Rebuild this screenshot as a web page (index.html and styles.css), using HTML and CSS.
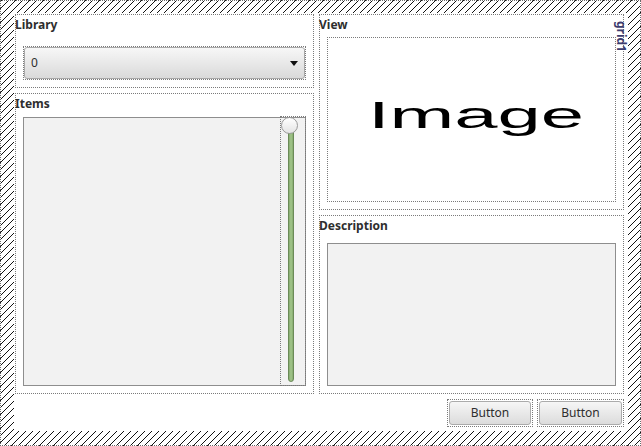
FILE: index.html
```html
<!DOCTYPE html>
<html>
<head>
<meta charset="utf-8">
<link rel="stylesheet" href="styles.css">
</head>
<body>
<div class="form">
  <div class="canvas">
    <div class="columns">
      <div class="col col-left">
        <section class="group lib">
          <div class="label">Library</div>
          <div class="outline combo-wrap">
            <div class="combo">
              <span class="combo-text">0</span>
              <svg class="arrow" width="8" height="5" viewBox="0 0 8 5"><polygon points="0,0 8,0 4,5" fill="#111"/></svg>
            </div>
          </div>
        </section>
        <section class="group items">
          <div class="label">Items</div>
          <div class="list">
            <div class="slider">
              <div class="groove"></div>
              <div class="handle"></div>
            </div>
          </div>
        </section>
      </div>
      <div class="col col-right">
        <section class="group view">
          <div class="label">View</div>
          <div class="image-box"><span class="image-text">Image</span></div>
        </section>
        <section class="group desc">
          <div class="label">Description</div>
          <div class="textedit"></div>
        </section>
      </div>
    </div>
    <div class="buttons">
      <div class="outline btn-wrap b1"><div class="btn">Button</div></div>
      <div class="outline btn-wrap b2"><div class="btn">Button</div></div>
    </div>
    <div class="layout-name">grid1</div>
  </div>
</div>
</body>
</html>
```

FILE: styles.css
```css
html, body {
  margin: 0;
  padding: 0;
  background: #ffffff;
}

.form {
  width: 641px;
  height: 446px;
  box-sizing: border-box;
  border: 1px dotted #6a6a6a;
  padding: 12px 12px 14px 13px;
  background-color: #ffffff;
  background-image: linear-gradient(to bottom right, transparent 45.5%, #111 45.5%, #111 54.5%, transparent 54.5%);
  background-size: 7px 7px;
  font-family: "Noto Sans", "DejaVu Sans", sans-serif;
}

.canvas {
  position: relative;
  width: 614px;
  height: 418px;
  box-sizing: border-box;
  padding: 1px 4px 0 1px;
  background: #ffffff;
  display: flex;
  flex-direction: column;
  gap: 5px;
}

.columns {
  display: flex;
  gap: 5px;
}

.col {
  display: flex;
  flex-direction: column;
  gap: 5px;
}

.col-left { width: 299px; }
.col-right { width: 305px; }

.group {
  box-sizing: border-box;
  border: 1px dotted #7a7a7a;
  display: flex;
  flex-direction: column;
}

.label {
  font-family: "Noto Sans", "DejaVu Sans", sans-serif;
  font-weight: 700;
  font-size: 12px;
  line-height: 16px;
  padding-top: 2px;
  margin-left: -1px;
  color: #2e2e2e;
}

.outline {
  box-sizing: border-box;
  border: 1px dotted #7a7a7a;
}

/* Library */
.lib { height: 74px; }

.combo-wrap {
  margin: 13px 7px 0 7px;
  height: 34px;
}

.combo {
  height: 32px;
  box-sizing: border-box;
  border: 1px solid #a8a8a8;
  border-radius: 3px;
  background: linear-gradient(to bottom, #f7f7f7, #dadada);
  display: flex;
  align-items: center;
  justify-content: space-between;
  padding: 0 6px 0 6px;
  font-size: 12px;
  line-height: 16px;
  color: #2e2e2e;
}

.arrow { display: block; }

/* Items */
.items { height: 301px; }

.list {
  margin: 5px 7px 0 7px;
  height: 269px;
  box-sizing: border-box;
  border: 1px solid #8e8e8e;
  background: #f2f2f2;
  display: flex;
  justify-content: flex-end;
}

.slider {
  position: relative;
  width: 26px;
  box-sizing: border-box;
  margin: -2px -1px -1px 0;
  border: 1px dotted #7a7a7a;
  display: flex;
  flex-direction: column;
}

.groove {
  flex: 1;
  width: 6px;
  box-sizing: border-box;
  margin: 9px 0 3px 7px;
  border: 1px solid #6b8a58;
  border-radius: 3px;
  background: linear-gradient(to right, #86ab6f, #a3c78c, #86ab6f);
}

.handle {
  position: absolute;
  top: 0;
  left: 0;
  width: 17px;
  height: 17px;
  box-sizing: border-box;
  border-radius: 50%;
  border: 1px solid #9a9a9a;
  background: linear-gradient(to bottom, #ffffff, #e4e4e4);
}

/* View */
.view { height: 196px; }

.image-box {
  margin: 4px 7px 0 7px;
  height: 165px;
  box-sizing: border-box;
  border: 1px dotted #7a7a7a;
  background: #ffffff;
  display: flex;
  align-items: center;
  justify-content: center;
  overflow: hidden;
}

.image-text {
  display: inline-block;
  font-family: "Liberation Sans", Arial, sans-serif;
  font-size: 36px;
  line-height: 36px;
  color: #000;
  transform: translate(5px, -4px) scaleX(2.16);
}

/* Description */
.desc { height: 179px; }

.textedit {
  margin: 9px 7px 0 7px;
  height: 143px;
  box-sizing: border-box;
  border: 1px solid #8e8e8e;
  background: #f2f2f2;
}

/* Buttons */
.buttons {
  display: flex;
  justify-content: flex-end;
  gap: 4px;
}

.btn-wrap {
  height: 28px;
  padding: 1px;
}

.b1 { width: 86px; }
.b2 { width: 87px; }

.btn {
  height: 100%;
  box-sizing: border-box;
  border: 1px solid #ababab;
  border-radius: 3px;
  background: linear-gradient(to bottom, #f6f6f6, #dcdcdc);
  display: flex;
  align-items: center;
  justify-content: center;
  font-size: 12px;
  line-height: 16px;
  color: #2e2e2e;
}

/* Layout name tag */
.layout-name {
  position: absolute;
  left: 600px;
  top: 8px;
  writing-mode: vertical-rl;
  font-family: "Noto Sans", "DejaVu Sans", sans-serif;
  font-weight: 700;
  font-size: 12px;
  line-height: 14px;
  color: #3c3c6e;
}
```
